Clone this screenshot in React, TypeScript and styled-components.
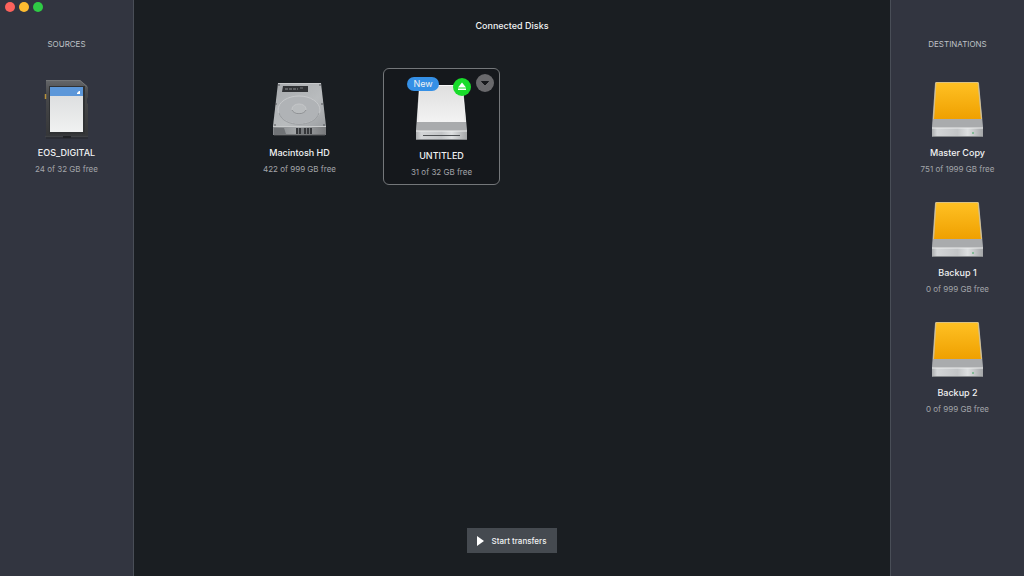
import React from "react";
import styled, { createGlobalStyle } from "styled-components";

const GlobalStyle = createGlobalStyle`
  *, *::before, *::after { box-sizing: border-box; }
  body {
    margin: 0;
    background: #1a1e22;
    color: #f1f2f3;
    font-family: Inter, "Liberation Sans", sans-serif;
    font-size: 9px;
    line-height: 12px;
  }
  h1, h2, p, ul { margin: 0; padding: 0; font-weight: 400; }
  ul { list-style: none; }
  button { border: 0; padding: 0; font: inherit; color: inherit; cursor: pointer; }
`;

const Window = styled.div`
  display: grid;
  grid-template-columns: 134px minmax(0, 1fr) 134px;
  min-height: 100vh;
`;

const Sidebar = styled.aside<{ $side: "left" | "right" }>`
  display: flex;
  flex-direction: column;
  align-items: center;
  background: #323540;
  ${({ $side }) => ($side === "left" ? "border-right" : "border-left")}: 1px solid #494e57;
`;

const TitleBar = styled.div`
  display: flex;
  align-self: stretch;
  align-items: center;
  gap: 4px;
  height: 14px;
  padding-left: 5px;
`;

const Light = styled.button<{ $color: string }>`
  width: 10px;
  height: 10px;
  border-radius: 50%;
  background: ${({ $color }) => $color};
`;

const SideHeading = styled.h2`
  margin-top: 24px;
  font-size: 8px;
  line-height: 12px;
  color: #bfc1c6;
`;

const SideList = styled.ul`
  display: flex;
  flex-direction: column;
  gap: 24px;
  margin-top: 29px;
`;

const DiskItem = styled.li`
  display: flex;
  flex-direction: column;
  align-items: center;
`;

const Picture = styled.svg`
  display: block;
  width: 61px;
  height: 60px;
`;

const DiskName = styled.p`
  margin-top: 8px;
  font-weight: 500;
  white-space: nowrap;
`;

const DiskSpace = styled.p`
  margin-top: 4px;
  font-size: 8px;
  color: #a3a5aa;
  white-space: nowrap;
`;

const Main = styled.main`
  display: flex;
  flex-direction: column;
`;

const Title = styled.h1`
  padding: 20px 0;
  font-size: 9px;
  line-height: 12px;
  font-weight: 500;
  text-align: center;
`;

const DiskGrid = styled.ul`
  display: grid;
  grid-template-columns: repeat(auto-fill, 117px);
  justify-content: center;
  gap: 25px;
  flex: 1;
  align-content: start;
  && { padding: 16px 64px 16px 65px; }
`;

const DiskTile = styled(DiskItem)<{ $selected?: boolean }>`
  position: relative;
  height: 117px;
  padding-top: ${({ $selected }) => ($selected ? 13 : 10)}px;
  border: 1px solid ${({ $selected }) => ($selected ? "#74777a" : "transparent")};
  border-radius: 6px;
  background: ${({ $selected }) => ($selected ? "#15181c" : "transparent")};
`;

const Badge = styled.span`
  position: absolute;
  top: 8px;
  left: 23px;
  width: 32px;
  border-radius: 7px;
  background: #3590e6;
  line-height: 14px;
  text-align: center;
`;

const RoundButton = styled.button<{ $kind: "eject" | "menu" }>`
  position: absolute;
  top: ${({ $kind }) => ($kind === "eject" ? 9 : 5)}px;
  right: ${({ $kind }) => ($kind === "eject" ? 28 : 5)}px;
  width: 18px;
  height: 18px;
  border-radius: 50%;
  background: ${({ $kind }) => ($kind === "eject" ? "#19dc2b" : "#69696c")};
  svg { display: block; }
`;

const Footer = styled.footer`
  display: flex;
  justify-content: center;
  padding-bottom: 23px;
`;

const StartButton = styled.button`
  display: flex;
  align-items: center;
  gap: 8px;
  height: 25px;
  padding: 0 11px 0 10px;
  background: #454a50;
  && { font-size: 8px; font-weight: 500; }
`;

function SdCard() {
  return (
    <Picture viewBox="0 0 61 60" aria-hidden="true">
      <defs>
        <linearGradient id="sdBody" x1="0" y1="0" x2="0" y2="1">
          <stop offset="0" stopColor="#65676a" />
          <stop offset="0.25" stopColor="#48494b" />
          <stop offset="1" stopColor="#353638" />
        </linearGradient>
        <linearGradient id="sdLabel" x1="0" y1="0" x2="0" y2="1">
          <stop offset="0" stopColor="#d9dbdc" />
          <stop offset="1" stopColor="#f0f1f1" />
        </linearGradient>
      </defs>
      <path d="M10 1h34l8 7v10l-1 2v4l1 1v32H10V20H9v-5h1z" fill="url(#sdBody)" />
      <path d="M10 1.500h34l7 6" fill="none" stroke="#737577" />
      <path d="M9.500 15v5" stroke="#b8923a" strokeWidth="1.500" />
      <path d="M13 7h36v48H13z" fill="#303234" />
      <path d="M14 8h33v45H14z" fill="url(#sdLabel)" />
      <path d="M14 8h33v9H14z" fill="#5c97d9" />
      <path d="M41 15v-1l2-2h1v3z" fill="#fff" />
      <path d="M9 57.500h43" stroke="#3f4144" strokeWidth="1.500" />
      <path d="M10 59h42" stroke="#24262a" />
      <path d="M27 58h8" stroke="#202225" strokeWidth="2" />
    </Picture>
  );
}

function InternalDrive() {
  return (
    <Picture viewBox="-1 -1 61 60" aria-hidden="true">
      <defs>
        <linearGradient id="hdTop" x1="0" y1="0" x2="1" y2="1">
          <stop offset="0" stopColor="#a6a9ac" />
          <stop offset="0.6" stopColor="#b9bcbe" />
          <stop offset="1" stopColor="#9c9fa2" />
        </linearGradient>
        <linearGradient id="hdFront" x1="0" y1="0" x2="1" y2="0">
          <stop offset="0" stopColor="#85888b" />
          <stop offset="0.5" stopColor="#a5a8aa" />
          <stop offset="1" stopColor="#77797b" />
        </linearGradient>
      </defs>
      <path d="M8 3h43l5 43H3z" fill="url(#hdTop)" />
      <path d="M8 3.500h43" stroke="#c7c9cb" />
      <path d="M3 46h53v9H3z" fill="url(#hdFront)" />
      <path d="M3 46.500h53" stroke="#c9cbcc" />
      <path d="M4 55h51" stroke="#56585b" />
      <path d="M13 6h25v6H12z" fill="#303235" />
      <path d="M15 9h13" stroke="#8a8c8f" strokeDasharray="3 1" />
      <path d="M30 8h3" stroke="#77797c" />
      <ellipse cx="29" cy="30" rx="21" ry="14" fill="#b0b3b6" stroke="#c7c9cb" />
      <path d="M9 33c4 15 36 15 40 0" fill="none" stroke="#989b9e" />
      <ellipse cx="29" cy="29" rx="7" ry="5" fill="#b9bcbe" stroke="#c5c7c9" />
      <path d="M22 30c2 5 12 5 14 0" fill="none" stroke="#8b8e91" />
      <g fill="#4a4d51">
        <circle cx="9" cy="5" r="0.800" />
        <circle cx="50" cy="5" r="0.800" />
        <circle cx="6" cy="24" r="0.800" />
        <circle cx="52" cy="24" r="0.800" />
        <circle cx="5" cy="45" r="0.800" />
        <circle cx="54" cy="45" r="0.800" />
      </g>
      <path d="M4 48h10l2 6H4z" fill="#707376" />
      <path d="M26 48h16v6H26z" fill="#76797c" />
      <path d="M27 48v6M30 48v6M35 48v6M38 48v6M41 48v6" stroke="#202225" strokeWidth="1.500" />
    </Picture>
  );
}

function ExternalDrive({ id, color }: { id: string; color: "white" | "yellow" }) {
  const yellow = color === "yellow";
  return (
    <Picture viewBox="0 0 61 60" aria-hidden="true">
      <defs>
        <linearGradient id={`${id}Top`} x1="0" y1="0" x2="0" y2="1">
          <stop offset="0" stopColor={yellow ? "#ffc124" : "#dedede"} />
          <stop offset="1" stopColor={yellow ? "#efa000" : "#f3f3f3"} />
        </linearGradient>
        <linearGradient id={`${id}Front`} x1="0" y1="0" x2="1" y2="0">
          <stop offset="0" stopColor="#acaeb0" />
          <stop offset="0.1" stopColor="#d3d5d7" />
          <stop offset="0.5" stopColor="#c3c5c7" />
          <stop offset="0.7" stopColor="#dddfe0" />
          <stop offset="1" stopColor="#a4a6a8" />
        </linearGradient>
      </defs>
      <path d="M9 3h42l1 1 4 44v9l-1 1H6l-1-1v-9L8 4z" fill="#a9abad" />
      <path d="M9 3h42l3 37H7z" fill={`url(#${id}Top)`} />
      <path d="M6.500 40L9 3.500h42l3.500 36.500" fill="none" stroke={yellow ? "#dcc282" : "#f8f8f8"} />
      <path d="M5 49h51v8l-1 1H6l-1-1z" fill={`url(#${id}Front)`} />
      <path d="M5 49h51" stroke="#eceded" />
      <path d="M6 57.500h49" stroke="#85888b" />
      {yellow ? (
        <circle cx="46" cy="54" r="1" fill="#6eb586" />
      ) : (
        <path d="M12 53.500h37" stroke="#4d5053" />
      )}
    </Picture>
  );
}

const destinations = [
  { id: "master", name: "Master Copy", space: "751 of 1999 GB free" },
  { id: "backup1", name: "Backup 1", space: "0 of 999 GB free" },
  { id: "backup2", name: "Backup 2", space: "0 of 999 GB free" },
];

export default function App() {
  return (
    <>
      <GlobalStyle />
      <Window>
        <Sidebar $side="left">
          <TitleBar>
            <Light $color="#fc625c" aria-label="Close" />
            <Light $color="#fdbc30" aria-label="Minimize" />
            <Light $color="#2fcb45" aria-label="Zoom" />
          </TitleBar>
          <SideHeading>SOURCES</SideHeading>
          <SideList>
            <DiskItem>
              <SdCard />
              <DiskName>EOS_DIGITAL</DiskName>
              <DiskSpace>24 of 32 GB free</DiskSpace>
            </DiskItem>
          </SideList>
        </Sidebar>
        <Main>
          <Title>Connected Disks</Title>
          <DiskGrid>
            <DiskTile>
              <InternalDrive />
              <DiskName>Macintosh HD</DiskName>
              <DiskSpace>422 of 999 GB free</DiskSpace>
            </DiskTile>
            <DiskTile $selected>
              <ExternalDrive id="untitled" color="white" />
              <DiskName>UNTITLED</DiskName>
              <DiskSpace>31 of 32 GB free</DiskSpace>
              <Badge>New</Badge>
              <RoundButton $kind="eject" aria-label="Eject">
                <svg width="18" height="18" viewBox="0 0 18 18">
                  <path d="M9 4.500l4 5H5zM5 10.500h8v1.500H5z" fill="#fff" />
                </svg>
              </RoundButton>
              <RoundButton $kind="menu" aria-label="Disk options">
                <svg width="18" height="18" viewBox="0 0 18 18">
                  <path d="M5.500 7.500h7L9 11z" fill="#17191c" stroke="#17191c" strokeLinejoin="round" />
                </svg>
              </RoundButton>
            </DiskTile>
          </DiskGrid>
          <Footer>
            <StartButton>
              <svg width="7" height="10" viewBox="0 0 7 10" aria-hidden="true">
                <path d="M0 0l7 5-7 5z" fill="#fff" />
              </svg>
              Start transfers
            </StartButton>
          </Footer>
        </Main>
        <Sidebar $side="right">
          <TitleBar />
          <SideHeading>DESTINATIONS</SideHeading>
          <SideList>
            {destinations.map((disk) => (
              <DiskItem key={disk.id}>
                <ExternalDrive id={disk.id} color="yellow" />
                <DiskName>{disk.name}</DiskName>
                <DiskSpace>{disk.space}</DiskSpace>
              </DiskItem>
            ))}
          </SideList>
        </Sidebar>
      </Window>
    </>
  );
}
